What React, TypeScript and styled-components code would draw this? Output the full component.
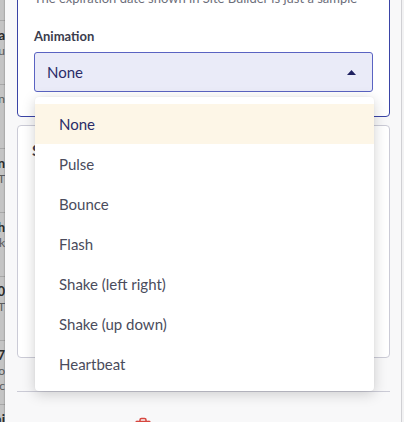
import React from "react";
import styled, { createGlobalStyle } from "styled-components";
import { Trash2 } from "lucide-react";

const GlobalStyle = createGlobalStyle`
  html, body { margin: 0; padding: 0; background: #c4c4c4; }
  body { font-family: Lato, "Liberation Sans", sans-serif; -webkit-font-smoothing: antialiased; }
  * { box-sizing: border-box; }
`;

const Shell = styled.div`
  display: flex;
  width: 404px;
  height: 422px;
  overflow: hidden;
`;

const BackdropStrip = styled.div`
  width: 5px;
  flex: none;
  background: #c4c4c4;
  overflow: hidden;
`;

const BackdropList = styled.div`
  margin-top: -43px;
  display: flex;
  flex-direction: column;
`;

const BackdropRow = styled.div`
  height: 64px;
  flex: none;
  border-bottom: 1px solid #a8a8a8;
  padding-top: 6px;
  display: flex;
  flex-direction: column;
  align-items: flex-end;
`;

const BackdropTitle = styled.div`
  font-size: 13px;
  line-height: 16px;
  font-weight: 700;
  color: #2c2c2c;
  white-space: nowrap;
`;

const BackdropSub = styled.div`
  font-size: 12px;
  line-height: 15px;
  color: #5c5c5c;
  white-space: nowrap;
`;

const Panel = styled.div`
  width: 396px;
  flex: none;
  background: #f8f8f9;
  box-shadow: -1px 0 1px rgba(0, 0, 0, 0.12);
  display: flex;
  flex-direction: column;
  padding: 0 11px 0 12px;
`;

const Gutter = styled.div`
  width: 3px;
  flex: none;
  border-left: 1px solid #d0d0d4;
  background: #f2f2f3;
`;

const ScrollInner = styled.div`
  margin-top: -28px;
  display: flex;
  flex-direction: column;
  gap: 8px;
`;

const Card = styled.section<{ $active?: boolean }>`
  background: #ffffff;
  border: 1px solid ${(p) => (p.$active ? "#3a44a6" : "#cbcbd6")};
  border-radius: 4px;
  display: flex;
  flex-direction: column;
  padding: ${(p) => (p.$active ? "16px 16px 24px" : "13px 16px 23px 14px")};
`;

const HelpText = styled.p`
  margin: 0;
  font-size: 13px;
  line-height: 18px;
  color: #6c6e7a;
`;

const FieldLabel = styled.div`
  margin: 20px 0 7px;
  font-size: 13px;
  line-height: 18px;
  font-weight: 700;
  color: #3b3d4d;
`;

const SelectWrap = styled.div`
  position: relative;
`;

const SelectBox = styled.div`
  height: 40px;
  border: 1px solid #5a63c2;
  border-radius: 3px;
  background: #eaebf8;
  padding: 0 16px 0 12px;
  display: flex;
  align-items: center;
  justify-content: space-between;
  font-size: 15px;
  color: #2a2c68;
`;

const Menu = styled.ul`
  position: absolute;
  z-index: 10;
  top: calc(100% + 5px);
  left: 1px;
  width: 100%;
  margin: 0;
  padding: 7px 0;
  list-style: none;
  background: #ffffff;
  border-radius: 4px;
  box-shadow: 0 3px 14px rgba(0, 0, 0, 0.18), 0 0 2px rgba(0, 0, 0, 0.06);
`;

const MenuItem = styled.li<{ $selected?: boolean }>`
  height: 40px;
  display: flex;
  align-items: center;
  padding-left: 24px;
  font-size: 15px;
  color: ${(p) => (p.$selected ? "#2a2c68" : "#4a4c5c")};
  background: ${(p) => (p.$selected ? "#fdf6e7" : "transparent")};
`;

const CardHeading = styled.h3`
  margin: 0;
  font-size: 16px;
  line-height: 22px;
  font-weight: 700;
  color: #3b3d4d;
`;

const CheckRow = styled.label`
  margin-top: 37px;
  display: flex;
  align-items: center;
  gap: 8px;
  padding-left: 3px;
  font-size: 14px;
  color: #3b3d4d;
`;

const CheckBox = styled.span`
  width: 16px;
  height: 16px;
  border: 1.5px solid #3b3d4d;
  border-radius: 3px;
  background: #fff;
`;

const Hint = styled.div`
  margin-top: 12px;
  padding-left: 4px;
  font-size: 12px;
  line-height: 16px;
  color: #8a8c98;
`;

const TextInput = styled.div`
  margin-top: 53px;
  margin-left: 3px;
  height: 38px;
  border: 1px solid #c8c8cf;
  border-radius: 3px;
  background: #fff;
`;

const Divider = styled.hr`
  margin: 25px 0 0;
  border: 0;
  height: 1px;
  background: #cbcbd6;
`;

const FooterActions = styled.div`
  display: flex;
  padding: 17px 0 0 117px;
  color: #d6463f;
`;

const backdropRows = [
  { t: "", s: [] as string[] },
  { t: "Holiday Banner Pla", s: ["Expires Thu"] },
  { t: "", s: ["Countdown ban"] },
  { t: "Flash Sale Bann", s: ["Expires T"] },
  { t: "Checkout Push", s: ["Expires Wk"] },
  { t: "Promo 2020", s: ["Expires T"] },
  { t: "Promo 2017", s: ["Expires fo", "Countdown c"] },
  { t: "Summer Mini", s: [] },
];

const options = [
  "None",
  "Pulse",
  "Bounce",
  "Flash",
  "Shake (left right)",
  "Shake (up down)",
  "Heartbeat",
];

export default function App() {
  return (
    <>
      <GlobalStyle />
      <Shell>
        <BackdropStrip>
          <BackdropList>
            {backdropRows.map((r, i) => (
              <BackdropRow key={i}>
                {r.t && <BackdropTitle>{r.t}</BackdropTitle>}
                {r.s.map((s, j) => (
                  <BackdropSub key={j}>{s}</BackdropSub>
                ))}
              </BackdropRow>
            ))}
          </BackdropList>
        </BackdropStrip>
        <Panel>
          <ScrollInner>
            <Card $active>
              <HelpText>The expiration date shown in Site Builder is just a sample</HelpText>
              <FieldLabel>Animation</FieldLabel>
              <SelectWrap>
                <SelectBox>
                  <span>None</span>
                  <svg width="9" height="5" viewBox="0 0 9 5" aria-hidden="true">
                    <polygon points="0,5 4.5,0 9,5" fill="#1f2160" />
                  </svg>
                </SelectBox>
                <Menu>
                  {options.map((o, i) => (
                    <MenuItem key={o} $selected={i === 0}>
                      {o}
                    </MenuItem>
                  ))}
                </Menu>
              </SelectWrap>
            </Card>
            <Card>
              <CardHeading>Style</CardHeading>
              <CheckRow>
                <CheckBox />
                Use custom colors
              </CheckRow>
              <Hint>Text color</Hint>
              <TextInput />
            </Card>
            <Divider />
            <FooterActions>
              <Trash2 size={18} strokeWidth={2} />
            </FooterActions>
          </ScrollInner>
        </Panel>
        <Gutter />
      </Shell>
    </>
  );
}
